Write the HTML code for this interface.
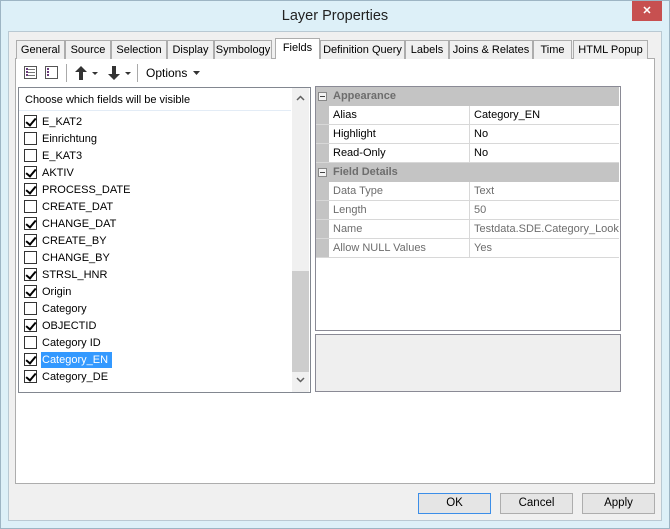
<!DOCTYPE html>
<html><head><style>
*{margin:0;padding:0;box-sizing:border-box}
body{width:670px;height:529px;background:#dbeef8;font-family:"Liberation Sans",sans-serif;font-size:11px;color:#000;position:relative;overflow:hidden}
.a{position:absolute}
.win{left:0;top:0;width:670px;height:529px;border:1px solid #9db5c4;background:#ddf0f8}
.title{left:0;top:8px;width:670px;text-align:center;font-size:14.5px;color:#222}
.close{left:632px;top:1px;width:30px;height:20px;background:#c75050;color:#fff;text-align:center;font-size:11px;line-height:20px;font-weight:bold}
.client{left:8px;top:31px;width:654px;height:490px;background:#f0f0f0;border:1px solid #b9c9d3}
.tab{top:40px;height:19px;border:1px solid #adadad;border-bottom:none;background:#f0f0f0;text-align:center;line-height:18px;font-size:11px}
.panel{left:15px;top:58px;width:640px;height:426px;background:#fff;border:1px solid #adadad}
.btn{top:493px;width:73px;height:21px;border:1px solid #adadad;background:#e5e5e5;text-align:center;line-height:19px;font-size:11.5px}
.row{left:24px;height:17px;line-height:16px}
.cb{position:absolute;left:0;top:1px;width:13px;height:13px;border:1px solid #333;background:#fff}
.cb.on::after{content:"";position:absolute;left:3px;top:0px;width:4px;height:8px;border:solid #000;border-width:0 2px 2px 0;transform:rotate(40deg)}
.lbl{position:absolute;left:17px;top:0;white-space:nowrap;padding:0 1px}
.g{left:316px;width:303px;height:19px;border-bottom:1px solid #d8d8d8}
.g .k{position:absolute;left:13px;top:0;width:141px;height:18px;padding-left:4px;line-height:18px;background:#fff;border-right:1px solid #d8d8d8}
.g .v{position:absolute;left:155px;top:0;width:148px;height:18px;padding-left:3px;line-height:18px;background:#fff;white-space:nowrap;overflow:hidden}
.cat{left:316px;width:303px;height:19px;background:#c4c4c4;line-height:18px;font-weight:bold;color:#6d6d6d}
.mn{position:absolute;left:2px;top:5px;width:9px;height:9px;border:1px solid #888;background:#f4f4f4}
.mn::after{content:"";position:absolute;left:1px;top:3px;width:5px;height:1px;background:#444}
.gr{color:#6d6d6d}
</style></head><body>
<div class="a win"></div>
<div class="a title">Layer Properties</div>
<div class="a close">✕</div>
<div class="a client"></div>
<div class="a panel"></div>
<div class="a tab" style="left:16px;width:49px">General</div>
<div class="a tab" style="left:65px;width:46px">Source</div>
<div class="a tab" style="left:111px;width:56px">Selection</div>
<div class="a tab" style="left:167px;width:47px">Display</div>
<div class="a tab" style="left:214px;width:58px">Symbology</div>
<div class="a tab" style="left:275px;top:38px;height:21px;width:45px;background:#fff;line-height:18px">Fields</div>
<div class="a tab" style="left:320px;width:85px">Definition Query</div>
<div class="a tab" style="left:405px;width:44px">Labels</div>
<div class="a tab" style="left:449px;width:84px">Joins &amp; Relates</div>
<div class="a tab" style="left:533px;width:39px">Time</div>
<div class="a tab" style="left:573px;width:75px">HTML Popup</div>

<svg class="a" style="left:22px;top:64px" width="185" height="18">
<rect x="2.5" y="2.5" width="12" height="12" fill="#fff" stroke="#555"/>
<g stroke="#777"><line x1="5" y1="5.5" x2="13" y2="5.5"/><line x1="5" y1="8.5" x2="13" y2="8.5"/><line x1="5" y1="11.5" x2="13" y2="11.5"/></g>
<g fill="#6a3c7a"><rect x="4" y="4" width="2" height="2"/><rect x="4" y="7" width="2" height="2"/><rect x="4" y="10" width="2" height="2"/></g>
<rect x="23.5" y="2.5" width="12" height="12" fill="#fff" stroke="#555"/>
<g fill="#6a3c7a"><rect x="25" y="4" width="2" height="2"/><rect x="25" y="7" width="2" height="2"/><rect x="25" y="10" width="2" height="2"/></g>
<line x1="44.5" y1="0" x2="44.5" y2="18" stroke="#aaa"/>
<path d="M59 2 L53 8 H57 V16 H61 V8 H65 Z" fill="#333"/>
<path d="M70 8 h6 l-3 3z" fill="#333"/>
<path d="M92 16 L86 10 H90 V2 H94 V10 H98 Z" fill="#333"/>
<path d="M103 8 h6 l-3 3z" fill="#333"/>
<line x1="115.5" y1="0" x2="115.5" y2="18" stroke="#aaa"/>
<text x="124" y="13" font-family="Liberation Sans" font-size="12" fill="#000">Options</text>
<path d="M171 7 h7 l-3.5 4z" fill="#333"/>
</svg>

<div class="a" style="left:18px;top:87px;width:293px;height:306px;border:1px solid #828790;background:#fff"></div>
<div class="a" style="left:19px;top:88px;width:272px;height:23px;border-bottom:1px solid #e3ecf6;line-height:24px;padding-left:6px">Choose which fields will be visible</div>
<div class="a" style="left:292px;top:88px;width:17px;height:304px;background:#f0f0f0"></div>
<div class="a" style="left:292px;top:271px;width:17px;height:101px;background:#cdcdcd"></div>
<svg class="a" style="left:292px;top:88px" width="17" height="304">
<path d="M5 12 L8.5 8.5 L12 12" fill="none" stroke="#606060" stroke-width="1.5"/>
<path d="M5 290 L8.5 293.5 L12 290" fill="none" stroke="#606060" stroke-width="1.5"/>
</svg>

<div class="a row" style="top:114px"><span class="cb on"></span><span class="lbl">E_KAT2</span></div>
<div class="a row" style="top:131px"><span class="cb"></span><span class="lbl">Einrichtung</span></div>
<div class="a row" style="top:148px"><span class="cb"></span><span class="lbl">E_KAT3</span></div>
<div class="a row" style="top:165px"><span class="cb on"></span><span class="lbl">AKTIV</span></div>
<div class="a row" style="top:182px"><span class="cb on"></span><span class="lbl">PROCESS_DATE</span></div>
<div class="a row" style="top:199px"><span class="cb"></span><span class="lbl">CREATE_DAT</span></div>
<div class="a row" style="top:216px"><span class="cb on"></span><span class="lbl">CHANGE_DAT</span></div>
<div class="a row" style="top:233px"><span class="cb on"></span><span class="lbl">CREATE_BY</span></div>
<div class="a row" style="top:250px"><span class="cb"></span><span class="lbl">CHANGE_BY</span></div>
<div class="a row" style="top:267px"><span class="cb on"></span><span class="lbl">STRSL_HNR</span></div>
<div class="a row" style="top:284px"><span class="cb on"></span><span class="lbl">Origin</span></div>
<div class="a row" style="top:301px"><span class="cb"></span><span class="lbl">Category</span></div>
<div class="a row" style="top:318px"><span class="cb on"></span><span class="lbl">OBJECTID</span></div>
<div class="a row" style="top:335px"><span class="cb"></span><span class="lbl">Category ID</span></div>
<div class="a row" style="top:352px"><span class="cb on"></span><span class="lbl" style="background:#3399ff;color:#fff;width:71px">Category_EN</span></div>
<div class="a row" style="top:369px"><span class="cb on"></span><span class="lbl">Category_DE</span></div>

<div class="a" style="left:315px;top:86px;width:306px;height:245px;border:1px solid #8a8a95;background:#fff"></div>
<div class="a" style="left:316px;top:87px;width:13px;height:170px;background:#c4c4c4"></div>
<div class="a cat" style="top:87px"><span class="mn"></span><span style="position:absolute;left:17px">Appearance</span></div>
<div class="a g" style="top:106px"><span class="k">Alias</span><span class="v">Category_EN</span></div>
<div class="a g" style="top:125px"><span class="k">Highlight</span><span class="v">No</span></div>
<div class="a g" style="top:144px"><span class="k">Read-Only</span><span class="v">No</span></div>
<div class="a cat" style="top:163px"><span class="mn"></span><span style="position:absolute;left:17px">Field Details</span></div>
<div class="a g gr" style="top:182px"><span class="k">Data Type</span><span class="v">Text</span></div>
<div class="a g gr" style="top:201px"><span class="k">Length</span><span class="v">50</span></div>
<div class="a g gr" style="top:220px"><span class="k">Name</span><span class="v">Testdata.SDE.Category_Lookup</span></div>
<div class="a g gr" style="top:239px"><span class="k">Allow NULL Values</span><span class="v">Yes</span></div>

<div class="a" style="left:315px;top:334px;width:306px;height:58px;border:1px solid #8a8a95;background:#efefef"></div>

<div class="a btn" style="left:418px;border-color:#3c8ee8">OK</div>
<div class="a btn" style="left:500px">Cancel</div>
<div class="a btn" style="left:582px">Apply</div>
</body></html>
